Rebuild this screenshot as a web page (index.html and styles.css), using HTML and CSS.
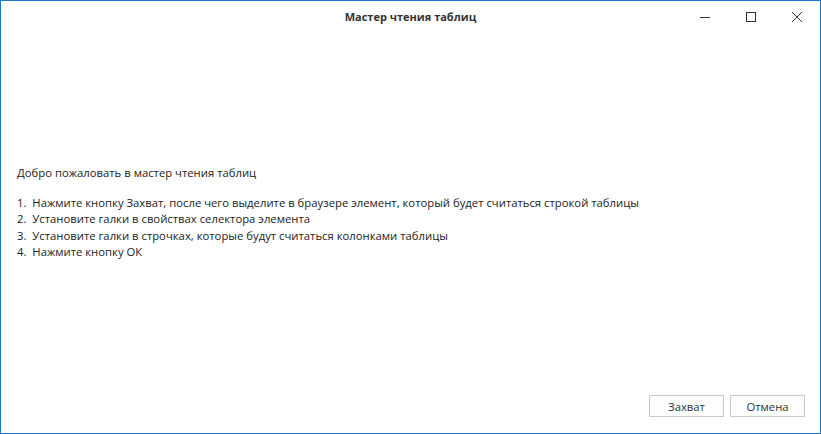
FILE: index.html
```
<!DOCTYPE html>
<html>
<head>
<meta charset="utf-8">
<link rel="stylesheet" href="styles.css">
</head>
<body>
<div class="window">
  <div class="titlebar">
    <div class="title">Мастер чтения таблиц</div>
    <div class="controls">
      <div class="ctrl"><svg width="10" height="10" viewBox="0 0 10 10"><path d="M0 5.5H10" stroke="#333" stroke-width="1"/></svg></div>
      <div class="ctrl"><svg width="10" height="10" viewBox="0 0 10 10"><rect x="0.5" y="0.5" width="9" height="9" fill="none" stroke="#333" stroke-width="1"/></svg></div>
      <div class="ctrl"><svg width="10" height="10" viewBox="0 0 10 10"><path d="M0 0L10 10M10 0L0 10" stroke="#333" stroke-width="1"/></svg></div>
    </div>
  </div>
  <div class="content">
    <div class="text">
      <div>Добро пожаловать в мастер чтения таблиц</div>
      <div class="blank"></div>
      <div>1.&nbsp;&nbsp;Нажмите кнопку Захват, после чего выделите в браузере элемент, который будет считаться строкой таблицы</div>
      <div>2.&nbsp;&nbsp;Установите галки в свойствах селектора элемента</div>
      <div>3.&nbsp;&nbsp;Установите галки в строчках, которые будут считаться колонками таблицы</div>
      <div>4.&nbsp;&nbsp;Нажмите кнопку ОК</div>
    </div>
  </div>
  <div class="footer">
    <button class="btn">Захват</button>
    <button class="btn">Отмена</button>
  </div>
</div>
</body>
</html>
```
FILE: styles.css
```
html, body {
  margin: 0;
  padding: 0;
  background: #fff;
}
.window {
  box-sizing: border-box;
  width: 821px;
  height: 434px;
  border: 1px solid #1979ca;
  display: flex;
  flex-direction: column;
  font-family: "Open Sans", "Liberation Sans", sans-serif;
  font-size: 11.3px;
  color: #222;
}
.titlebar {
  height: 31px;
  display: flex;
  align-items: center;
  justify-content: center;
  position: relative;
  flex: none;
}
.title {
  font-weight: bold;
  color: #333;
  font-size: 11px;
}
.controls {
  position: absolute;
  right: 0;
  top: 0;
  display: flex;
}
.ctrl {
  width: 46px;
  height: 32px;
  display: flex;
  align-items: center;
  justify-content: center;
}
.content {
  flex: 1;
  padding: 133px 0 0 16px;
}
.text {
  line-height: 16.3px;
  white-space: nowrap;
}
.blank {
  height: 13.7px;
}
.footer {
  display: flex;
  justify-content: flex-end;
  gap: 6px;
  padding: 0 15px 16px 0;
}
.btn {
  box-sizing: border-box;
  width: 75px;
  height: 22px;
  border: 1px solid #c8c8c8;
  background: #fdfdfd;
  font-family: inherit;
  font-size: 11.3px;
  color: #333;
  padding: 0;
}
```
